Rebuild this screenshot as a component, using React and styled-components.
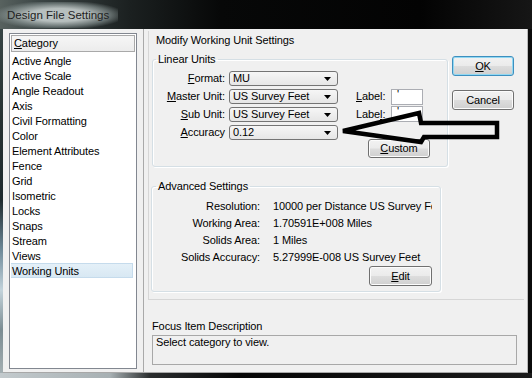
import React from "react";
import styled, { createGlobalStyle } from "styled-components";

const GlobalStyle = createGlobalStyle`
  html, body { margin: 0; padding: 0; background: #0b0b0b; }
  body { font-family: "Liberation Sans", Arial, sans-serif; font-size: 11px; letter-spacing: -0.1px; color: #000; }
  #root { width: 532px; height: 378px; overflow: hidden; }
  * { box-sizing: border-box; }
`;

const Window = styled.div`
  position: relative;
  width: 532px;
  height: 378px;
  display: flex;
  flex-direction: column;
  background:
    linear-gradient(90deg, #c3cacd 0, #a7b0b3 110px, #2a2d2e 150px, #060606 240px, #0b0b0b 320px, #1b1b1b 100%) bottom / 100% 5px no-repeat,
    linear-gradient(180deg, #3b4a4a 0, #273232 120px, #1e2a2e 200px, #6f8a99 250px, #c3d3db 290px, #7b8c92 330px, #a9b3b6 378px) left / 3px 100% no-repeat,
    #0b0b0b;
`;

const TitleBar = styled.div`
  height: 29px;
  flex: none;
  display: flex;
  align-items: center;
  padding-left: 0;
  background: linear-gradient(90deg, #58625f 0, #3b4545 40px, #1b2020 130px, #070808 220px, #030303 420px, #161616 100%);
`;

const TitleText = styled.span`
  display: inline-block;
  padding: 7px 9px 7px 7px;
  font-size: 11.5px;
  letter-spacing: 0;
  color: #1e2222;
  background: radial-gradient(ellipse at 50% 50%, rgba(190, 198, 197, 0.95) 35%, rgba(140, 152, 151, 0.6) 62%, rgba(90, 100, 100, 0) 80%);
`;

const Client = styled.div`
  flex: 1;
  margin: 0 4px 5px 3px;
  display: flex;
  background: #f0f0f0;
  border-bottom: 1px solid #a8a8a8;
`;

const LeftPane = styled.div`
  width: 140px;
  flex: none;
  padding: 4px 6px 3px 6px;
  display: flex;
`;

const ListBox = styled.div`
  flex: 1;
  background: #fff;
  border: 1px solid #828790;
  padding: 1px 1px;
  display: flex;
  flex-direction: column;
`;

const ListHeader = styled.div`
  height: 17px;
  line-height: 15px;
  padding-left: 2px;
  border: 1px solid #a9a9a9;
  background: linear-gradient(#f6f6f6, #ececec);
  margin-bottom: 1px;
`;

const ListItem = styled.div`
  height: 15px;
  line-height: 15px;
  padding-left: 1px;
  margin-right: 2px;
  border: 1px solid ${(p) => (p.$selected ? "#c5dbec" : "transparent")};
  border-left: none;
  background: ${(p) => (p.$selected ? "linear-gradient(#e4f0f8, #d8e8f3)" : "transparent")};
  white-space: nowrap;
`;

const RightPane = styled.div`
  flex: 1;
  display: flex;
  flex-direction: column;
  border-left: 1px solid #a9a9a9;
  border-right: 1px solid #b9b9b9;
`;

const UpperPanel = styled.div`
  margin: 2px 3px 0 4px;
  height: 269px;
  border-left: 1px solid #d6d6d6;
  border-bottom: 1px solid #d6d6d6;
  display: flex;
  padding-left: 3px;
`;

const MainCol = styled.div`
  width: 296px;
  display: flex;
  flex-direction: column;
  padding-top: 2px;
`;

const PanelTitle = styled.div`
  height: 14px;
  line-height: 14px;
  padding-left: 4px;
  margin-bottom: 5px;
`;

const Group = styled.fieldset`
  margin: ${(p) => p.$margin || "0"};
  width: ${(p) => p.$width}px;
  padding: 0 ${(p) => p.$padRight || 0}px ${(p) => p.$padBottom || 0}px 0;
  border: 1px solid #d5dfe5;
  border-radius: 3px;
  box-shadow: inset 1px 1px 0 #fff, 1px 1px 0 #fff;
  min-width: 0;
`;

const Legend = styled.legend`
  margin-left: ${(p) => p.$ml || 3}px;
  padding: 0 2px;
  line-height: 14px;
  height: 14px;
`;

const LinearGrid = styled.div`
  margin-top: 5px;
  display: grid;
  grid-template-columns: 76px 127px 35px 39px;
  grid-auto-rows: 15px;
  row-gap: 3px;
  align-items: center;
`;

const FieldLabel = styled.div`
  text-align: right;
  padding-right: ${(p) => (p.$tight ? 0 : 4)}px;
  white-space: nowrap;
  line-height: 15px;
`;

const SideLabel = styled.div`
  line-height: 15px;
  white-space: nowrap;
  align-self: ${(p) => p.$align || "center"};
`;

const Combo = styled.div`
  width: 109px;
  height: 15px;
  border: 1px solid #747474;
  border-radius: 3px;
  background: linear-gradient(#f6f6f6, #e6e6e6);
  display: flex;
  align-items: center;
  justify-content: space-between;
  padding: 0 6px 0 3px;
  line-height: 13px;
`;

const Caret = styled.svg`
  width: 7px;
  height: 4px;
  flex: none;
`;

const TextBox = styled.div`
  width: 32px;
  height: 16px;
  border: 1px solid #abadb3;
  background: #fff;
  padding: 0 5px;
  line-height: 9px;
  font-size: 11px;
  align-self: start;
  margin-top: ${(p) => p.$mt || 0}px;
`;

const Button = styled.button`
  font-family: inherit;
  font-size: 11px;
  letter-spacing: inherit;
  color: #000;
  width: ${(p) => p.$w || 62}px;
  height: ${(p) => p.$h || 20}px;
  padding: 0;
  border: 1px solid ${(p) => (p.$default ? "#3d8fbf" : "#707070")};
  border-radius: 3px;
  background: linear-gradient(#f2f2f2 0%, #ebebeb 48%, #dddddd 52%, #cfcfcf 100%);
  box-shadow: inset 0 0 0 1px ${(p) => (p.$default ? "#92d8f2" : "#fcfcfc")};
  margin: ${(p) => p.$margin || "0"};
  justify-self: ${(p) => p.$justify || "auto"};
  grid-column: ${(p) => p.$col || "auto"};
`;

const AdvGrid = styled.div`
  margin-top: 5px;
  display: grid;
  grid-template-columns: 108px 159px;
  column-gap: 13px;
  grid-auto-rows: 17px;
  align-items: center;
`;

const Value = styled.div`
  white-space: nowrap;
  overflow: hidden;
  line-height: 17px;
`;

const ButtonCol = styled.div`
  margin-left: 4px;
  padding-top: 25px;
  display: flex;
  flex-direction: column;
  gap: 14px;
`;

const FocusLabel = styled.div`
  margin: 19px 0 0 8px;
  height: 14px;
  line-height: 14px;
`;

const FocusBox = styled.div`
  margin: 2px 10px 0 8px;
  height: 30px;
  border: 1px solid #a8a8a8;
  background: #f0f0f0;
  padding: 0 3px;
  line-height: 12px;
`;

const ArrowOverlay = styled.svg`
  position: absolute;
  left: 0;
  top: 0;
  width: 532px;
  height: 378px;
  pointer-events: none;
`;

const U = styled.span`
  text-decoration: underline;
  text-underline-offset: 1px;
`;

const items = [
  "Active Angle",
  "Active Scale",
  "Angle Readout",
  "Axis",
  "Civil Formatting",
  "Color",
  "Element Attributes",
  "Fence",
  "Grid",
  "Isometric",
  "Locks",
  "Snaps",
  "Stream",
  "Views",
  "Working Units",
];

const advanced = [
  ["Resolution:", "10000 per Distance US Survey Foot"],
  ["Working Area:", "1.70591E+008 Miles"],
  ["Solids Area:", "1 Miles"],
  ["Solids Accuracy:", "5.27999E-008 US Survey Feet"],
];

function Select({ value }) {
  return (
    <Combo>
      <span>{value}</span>
      <Caret viewBox="0 0 7 4">
        <path d="M0 0 H7 L3.5 4 Z" fill="#000" />
      </Caret>
    </Combo>
  );
}

export default function App() {
  return (
    <>
      <GlobalStyle />
      <Window>
        <TitleBar>
          <TitleText>Design File Settings</TitleText>
        </TitleBar>
        <Client>
          <LeftPane>
            <ListBox>
              <ListHeader>
                <U>C</U>ategory
              </ListHeader>
              {items.map((it) => (
                <ListItem key={it} $selected={it === "Working Units"}>
                  {it}
                </ListItem>
              ))}
            </ListBox>
          </LeftPane>
          <RightPane>
            <UpperPanel>
              <MainCol>
                <PanelTitle>Modify Working Unit Settings</PanelTitle>
                <Group $width={296} $padRight={17} $padBottom={8}>
                  <Legend>Linear Units</Legend>
                  <LinearGrid>
                    <FieldLabel>
                      <U>F</U>ormat:
                    </FieldLabel>
                    <Select value="MU" />
                    <div />
                    <div />
                    <FieldLabel>
                      <U>M</U>aster Unit:
                    </FieldLabel>
                    <Select value="US Survey Feet" />
                    <SideLabel>
                      <U>L</U>abel:
                    </SideLabel>
                    <TextBox>'</TextBox>
                    <FieldLabel>
                      <U>S</U>ub Unit:
                    </FieldLabel>
                    <Select value="US Survey Feet" />
                    <SideLabel $align="start">
                      Labe<U>l</U>:
                    </SideLabel>
                    <TextBox $mt={-1}>'</TextBox>
                    <FieldLabel>
                      <U>A</U>ccuracy
                    </FieldLabel>
                    <Select value="0.12" />
                    <div />
                    <div />
                    <div />
                    <div />
                    <Button $col="3 / 5" $justify="end" $margin="-5px 0 0 0" $h={19}>
                      <U>C</U>ustom
                    </Button>
                  </LinearGrid>
                </Group>
                <Group $width={290} $margin="12px 0 0 -1px" $padRight={8} $padBottom={8}>
                  <Legend $ml={4}>Advanced Settings</Legend>
                  <AdvGrid>
                    {advanced.map(([k, v]) => (
                      <React.Fragment key={k}>
                        <FieldLabel $tight>{k}</FieldLabel>
                        <Value>{v}</Value>
                      </React.Fragment>
                    ))}
                    <div />
                    <Button $justify="end" $margin="2px 0 0 0" $w={63}>
                      <U>E</U>dit
                    </Button>
                  </AdvGrid>
                </Group>
              </MainCol>
              <ButtonCol>
                <Button $default>
                  <U>O</U>K
                </Button>
                <Button>Cancel</Button>
              </ButtonCol>
            </UpperPanel>
            <FocusLabel>Focus Item Description</FocusLabel>
            <FocusBox>Select category to view.</FocusBox>
          </RightPane>
        </Client>
        <ArrowOverlay viewBox="0 0 532 378">
          <polygon
            points="343,131 419,113 421,123 497,123 497,137 424,137 421,142"
            fill="none"
            stroke="#000"
            strokeWidth="4.5"
            strokeLinejoin="miter"
          />
        </ArrowOverlay>
      </Window>
    </>
  );
}
